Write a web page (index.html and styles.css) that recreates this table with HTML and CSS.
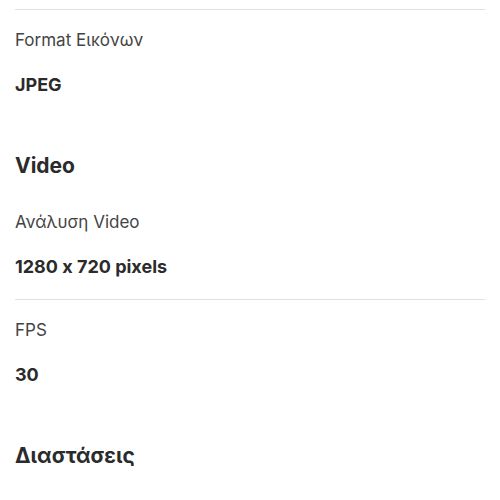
FILE: index.html
```html
<!DOCTYPE html>
<html lang="el">
<head>
    <meta charset="UTF-8">
    <meta name="viewport" content="width=device-width, initial-scale=1.0">
    <title>Χαρακτηριστικά</title>
    <link rel="stylesheet" href="styles.css">
</head>
<body>
    <div id="specs">
        <div class="section">
            <div class="row">
                <div class="label">Format Εικόνων</div>
                <div class="value">JPEG</div>
            </div>
        </div>

        <div class="section">
            <h2 class="section-title">Video</h2>
            <div class="row">
                <div class="label">Ανάλυση Video</div>
                <div class="value">1280 x 720 pixels</div>
            </div>
            <div class="row">
                <div class="label">FPS</div>
                <div class="value">30</div>
            </div>
        </div>

        <div class="section">
            <h2 class="section-title">Διαστάσεις</h2>
        </div>
    </div>
</body>
</html>
```

FILE: styles.css
```css
body {
    font-family: Inter, "Noto Sans", sans-serif;
    font-feature-settings: "calt" 0;
    margin: 0;
    background: #fff;
    color: #333;
}

#specs {
    padding: 9px 15px 0;
}

.section {
    margin-bottom: 35px;
}

.section:first-child .row:first-child {
    border-top: 1px solid #e0e0e0;
}

.section-title {
    font-size: 21px;
    line-height: 28px;
    font-weight: 700;
    color: #2b2b2b;
    margin: 0 0 12px;
}

.row {
    padding: 18px 0 20px;
}

.row + .row {
    border-top: 1px solid #e0e0e0;
}

.label {
    font-size: 17px;
    line-height: 24px;
    color: #444;
    margin-bottom: 21px;
}

.value {
    font-size: 18px;
    line-height: 24px;
    font-weight: 700;
    color: #2b2b2b;
}
```
